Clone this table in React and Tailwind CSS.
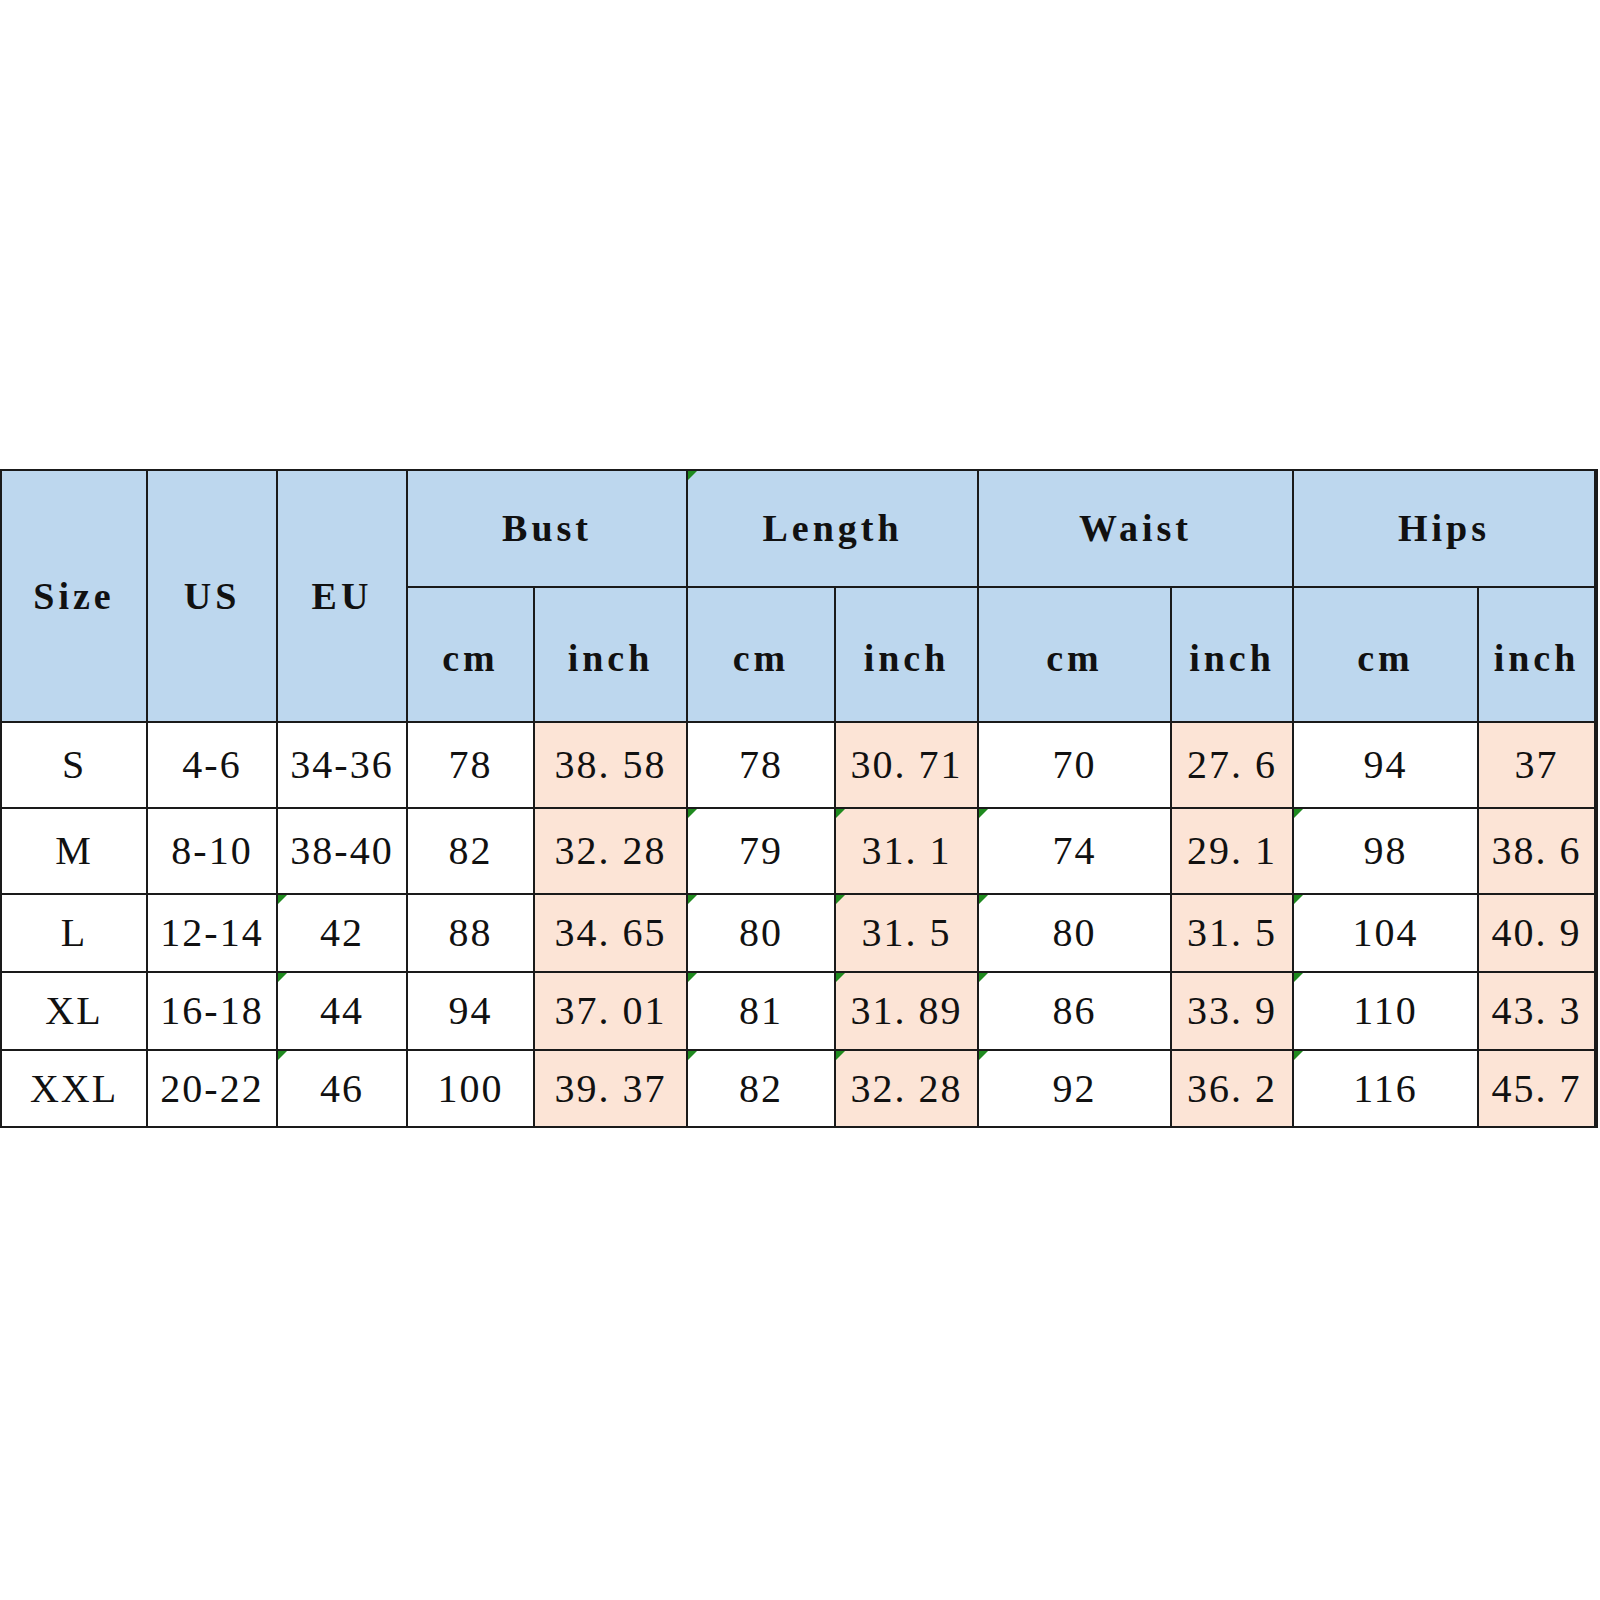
const rows = [
  ["S", "4-6", "34-36", "78", "38. 58", "78", "30. 71", "70", "27. 6", "94", "37"],
  ["M", "8-10", "38-40", "82", "32. 28", "79", "31. 1", "74", "29. 1", "98", "38. 6"],
  ["L", "12-14", "42", "88", "34. 65", "80", "31. 5", "80", "31. 5", "104", "40. 9"],
  ["XL", "16-18", "44", "94", "37. 01", "81", "31. 89", "86", "33. 9", "110", "43. 3"],
  ["XXL", "20-22", "46", "100", "39. 37", "82", "32. 28", "92", "36. 2", "116", "45. 7"],
];

// Excel "number stored as text" markers
const flagged = {
  0: [],
  1: [5, 6, 7, 9],
  2: [2, 5, 6, 7, 9],
  3: [2, 5, 6, 7, 9],
  4: [2, 5, 6, 7, 9],
};

const inchCols = [4, 6, 8, 10];

function Flag() {
  return (
    <svg className="absolute top-0 left-0" width="9" height="9" viewBox="0 0 9 9">
      <polygon points="0,0 9,0 0,9" fill="#1f8a1f" />
    </svg>
  );
}

const head = "bg-[#bdd7ee] flex items-center justify-center font-bold text-[38px] tracking-[4px] text-[#111]";

export default function App() {
  return (
    <div className="min-h-screen bg-white pt-[469px] font-['Liberation_Serif',serif]">
      <div className="grid w-[1598px] bg-[#1a1a1a] gap-[2px] p-[2px] grid-cols-[144px_128px_128px_125px_151px_146px_141px_191px_120px_183px_115px] grid-rows-[115px_133px_84px_84px_76px_76px_75px]">
        <div className={`${head} row-span-2`}>Size</div>
        <div className={`${head} row-span-2`}>US</div>
        <div className={`${head} row-span-2`}>EU</div>
        <div className={`${head} col-span-2`}>Bust</div>
        <div className={`${head} col-span-2 relative`}>
          <Flag />
          Length
        </div>
        <div className={`${head} col-span-2`}>Waist</div>
        <div className={`${head} col-span-2`}>Hips</div>
        {["cm", "inch", "cm", "inch", "cm", "inch", "cm", "inch"].map((t, i) => (
          <div key={i} className={`${head} pt-2`}>{t}</div>
        ))}
        {rows.map((r, ri) =>
          r.map((v, ci) => (
            <div
              key={`${ri}-${ci}`}
              className={`relative flex items-center justify-center text-[40px] tracking-[2px] text-[#111] ${inchCols.includes(ci) ? "bg-[#fce4d6]" : "bg-white"}`}
            >
              {flagged[ri].includes(ci) && <Flag />}
              {v}
            </div>
          ))
        )}
      </div>
    </div>
  );
}
